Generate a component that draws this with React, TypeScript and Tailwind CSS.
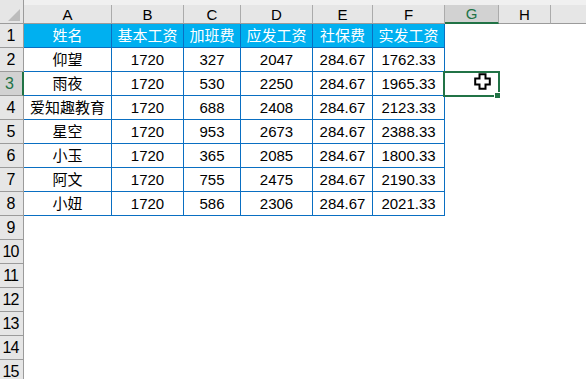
import React from "react";

const cols = [
  { l: "A", w: "w-[88px]" },
  { l: "B", w: "w-[72px]" },
  { l: "C", w: "w-[57px]" },
  { l: "D", w: "w-[72px]" },
  { l: "E", w: "w-[60px]" },
  { l: "F", w: "w-[72px]" },
  { l: "G", w: "w-[54px]" },
  { l: "H", w: "w-[52px]" },
];

const data: string[][] = [
  ["姓名", "基本工资", "加班费", "应发工资", "社保费", "实发工资"],
  ["仰望", "1720", "327", "2047", "284.67", "1762.33"],
  ["雨夜", "1720", "530", "2250", "284.67", "1965.33"],
  ["爱知趣教育", "1720", "688", "2408", "284.67", "2123.33"],
  ["星空", "1720", "953", "2673", "284.67", "2388.33"],
  ["小玉", "1720", "365", "2085", "284.67", "1800.33"],
  ["阿文", "1720", "755", "2475", "284.67", "2190.33"],
  ["小妞", "1720", "586", "2306", "284.67", "2021.33"],
];

export default function App() {
  const rows = Array.from({ length: 15 }, (_, i) => i + 1);
  return (
    <div className="relative w-[586px] h-[379px] overflow-hidden bg-white font-['Liberation_Sans','Noto_Sans_CJK_SC',sans-serif] text-[15px] text-black leading-none">
      {/* column header */}
      <div className="flex h-[24px]">
        <div className="relative w-[24px] shrink-0 h-[24px] bg-[#e6e6e6] border-r border-b border-[#9b9b9b]">
          <svg className="absolute left-[8px] top-[9px]" width="12" height="12" viewBox="0 0 12 12">
            <polygon points="12,0 12,12 0,12" fill="#bcbcbc" />
          </svg>
        </div>
        <div className="flex-1 flex flex-col">
          <div className="h-[5px] bg-[#f0f0f0]" />
          <div className="flex h-[19px]">
            {cols.map((c) =>
              c.l === "G" ? (
                <div
                  key={c.l}
                  className={`${c.w} shrink-0 flex items-center justify-center bg-[#d2d2d2] border-r border-r-[#ababab] border-b-2 border-b-[#217346] text-[#217346]`}
                >
                  {c.l}
                </div>
              ) : (
                <div
                  key={c.l}
                  className={`${c.w} shrink-0 flex items-center justify-center bg-[#e6e6e6] border-r border-r-[#ababab] border-b border-b-[#9b9b9b]`}
                >
                  {c.l}
                </div>
              )
            )}
            <div className="flex-1 bg-[#e6e6e6] border-b border-b-[#9b9b9b]" />
          </div>
        </div>
      </div>
      {/* rows */}
      {rows.map((r) => {
        const rowData = data[r - 1];
        const sel = r === 3;
        return (
          <div key={r} className="flex h-[24px]">
            {sel ? (
              <div className="w-[24px] shrink-0 flex items-center justify-center pr-[3px] bg-[#d2d2d2] text-[#217346] border-r-2 border-r-[#217346] border-b border-b-[#9b9b9b] text-[16px]">
                {r}
              </div>
            ) : (
              <div className="w-[24px] shrink-0 flex items-center justify-center pr-[2px] bg-[#e6e6e6] border-r border-r-[#9b9b9b] border-b border-b-[#9b9b9b] text-[16px] tracking-[-1px]">
                {r}
              </div>
            )}
            {cols.map((c, ci) => {
              const inTable = rowData && ci < 6;
              if (inTable) {
                const header = r === 1;
                return (
                  <div
                    key={c.l}
                    className={`${c.w} shrink-0 flex items-center justify-center whitespace-nowrap border-r border-b border-[#0a6fc2] ${
                      header ? "bg-[#00b0f0] text-white" : "bg-white"
                    }`}
                  >
                    {rowData[ci]}
                  </div>
                );
              }
              return <div key={c.l} className={`${c.w} shrink-0`} />;
            })}
            <div className="flex-1" />
          </div>
        );
      })}
      {/* selection */}
      <div className="absolute left-[443px] top-[71px] w-[57px] h-[26px] border-2 border-[#217346]" />
      <div className="absolute left-[494px] top-[92px] w-[7px] h-[7px] bg-[#217346] border border-white" />
      {/* cursor */}
      <svg className="absolute left-[474px] top-[73px]" width="17" height="17" viewBox="0 0 17 17">
        <polygon
          points="5.5,1.2 11.5,1.2 11.5,5.5 15.8,5.5 15.8,11.5 11.5,11.5 11.5,15.8 5.5,15.8 5.5,11.5 1.2,11.5 1.2,5.5 5.5,5.5"
          fill="white"
          stroke="black"
          strokeWidth="2"
          strokeLinejoin="miter"
        />
      </svg>
    </div>
  );
}
